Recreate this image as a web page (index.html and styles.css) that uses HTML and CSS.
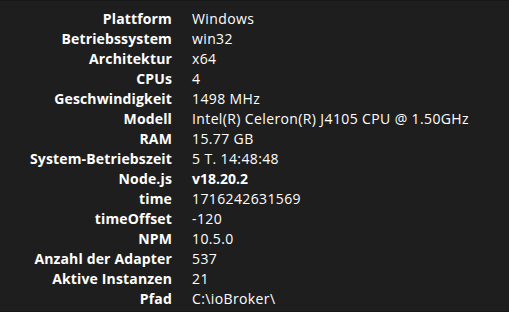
FILE: index.html
```html
<!DOCTYPE html>
<html lang="de">
<head>
<meta charset="utf-8">
<link rel="stylesheet" href="styles.css">
</head>
<body>
<div class="panel">
  <div class="info">
    <div class="k">Plattform</div><div class="v">Windows</div>
    <div class="k">Betriebssystem</div><div class="v">win32</div>
    <div class="k">Architektur</div><div class="v">x64</div>
    <div class="k">CPUs</div><div class="v">4</div>
    <div class="k">Geschwindigkeit</div><div class="v">1498 MHz</div>
    <div class="k">Modell</div><div class="v">Intel(R) Celeron(R) J4105 CPU @ 1.50GHz</div>
    <div class="k">RAM</div><div class="v">15.77 GB</div>
    <div class="k">System-Betriebszeit</div><div class="v">5 T. 14:48:48</div>
    <div class="k">Node.js</div><div class="v b">v18.20.2</div>
    <div class="k">time</div><div class="v">1716242631569</div>
    <div class="k">timeOffset</div><div class="v">-120</div>
    <div class="k">NPM</div><div class="v">10.5.0</div>
    <div class="k">Anzahl der Adapter</div><div class="v">537</div>
    <div class="k">Aktive Instanzen</div><div class="v">21</div>
    <div class="k">Pfad</div><div class="v">C:\ioBroker\</div>
  </div>
</div>
</body>
</html>
```
FILE: styles.css
```css
html, body {
  margin: 0;
  padding: 0;
  background: #1e1e1e;
}
.panel {
  width: 509px;
  height: 312px;
  box-sizing: border-box;
  border-top: 1px solid #171717;
  border-bottom: 1px solid #171717;
  background: #1e1e1e;
  padding-top: 8px;
  font-family: "Open Sans", "Noto Sans", sans-serif;
  font-size: 14px;
  color: #fff;
}
.info {
  display: grid;
  grid-template-columns: 172px 1fr;
  column-gap: 20px;
  grid-auto-rows: 20px;
  line-height: 20px;
}
.k {
  text-align: right;
  font-weight: 700;
  letter-spacing: 0.15px;
}
.v {
  font-weight: 400;
  letter-spacing: 0.38px;
}
.v.b {
  font-weight: 700;
  letter-spacing: 0;
}
```
